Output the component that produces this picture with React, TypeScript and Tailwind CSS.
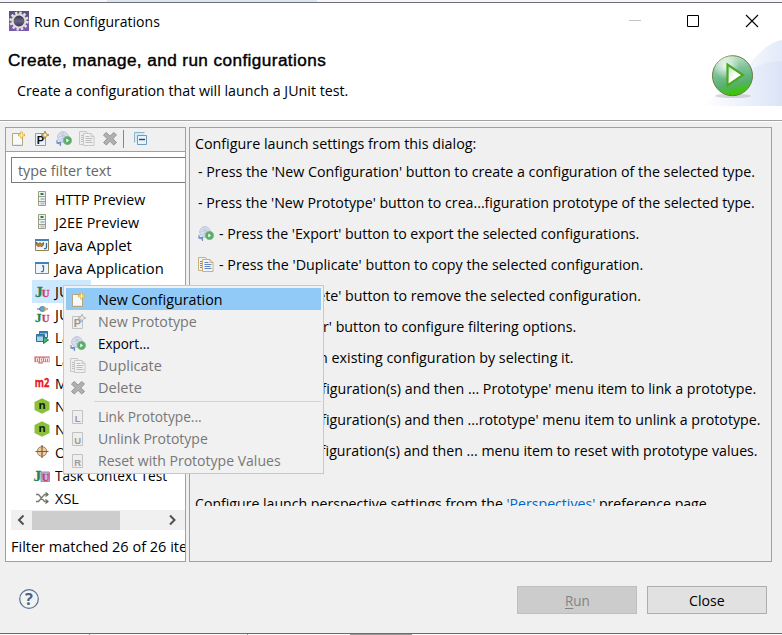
import { useLayoutEffect, useRef, useState, type ReactNode } from 'react';

/* Single line of text squeezed or stretched to a given width. */
function Fit({ w, className = '', children }: { w: number; className?: string; children: ReactNode }) {
  const ref = useRef<HTMLSpanElement>(null);
  const [scale, setScale] = useState(1);
  useLayoutEffect(() => {
    if (ref.current) setScale(w / ref.current.offsetWidth);
  }, [w]);
  return (
    <span className="block shrink-0" style={{ width: w }}>
      <span
        ref={ref}
        className={`inline-block origin-left whitespace-nowrap ${className}`}
        style={{ transform: `scaleX(${scale})` }}
      >
        {children}
      </span>
    </span>
  );
}

function Svg({ children, className = 'size-4' }: { children: ReactNode; className?: string }) {
  return (
    <svg viewBox="0 0 16 16" className={`block shrink-0 ${className}`} fill="none">
      {children}
    </svg>
  );
}

const sans = 'font-["Open_Sans","Liberation_Sans",sans-serif]';

function EclipseIcon() {
  return (
    <svg viewBox="0 0 20 20" className="-mt-0.5 block size-5 shrink-0">
      <defs>
        <linearGradient id="ecl" x1="0" y1="0" x2="0" y2="1">
          <stop offset="0" stopColor="#57507c" />
          <stop offset="1" stopColor="#7a5cb0" />
        </linearGradient>
        <linearGradient id="eclc" x1="0" y1="0" x2="0" y2="1">
          <stop offset="0" stopColor="#282546" />
          <stop offset="0.5" stopColor="#6b6684" />
          <stop offset="1" stopColor="#30275c" />
        </linearGradient>
      </defs>
      <rect width="20" height="20" fill="url(#ecl)" />
      <circle cx="10" cy="10" r="8.3" fill="none" stroke="#e6e2dc" strokeWidth="2.6" strokeDasharray="2.4 1.95" />
      <circle cx="10" cy="10" r="6.5" fill="url(#eclc)" stroke="#dedad4" strokeWidth="2.2" />
    </svg>
  );
}

function NewIcon() {
  return (
    <Svg>
      <path d="M2.5 2.5h8l2 3v9h-10z" fill="#f7fafc" stroke="#b5a67a" />
      <path d="M3.5 13.5h8" stroke="#dfe9f2" />
      <path d="M11.5 .5v7M8 4h7" stroke="#d9b64c" strokeWidth="2.4" />
      <path d="M11.5 1.5v5M9 4h5" stroke="#fff3bd" strokeWidth="1" />
    </Svg>
  );
}

function PrototypeIcon({ gray = false }: { gray?: boolean }) {
  return (
    <Svg>
      <path d="M2.5 2.5h10v12h-10z" fill={gray ? '#eeeeee' : '#eaf3fa'} stroke={gray ? '#c2c2c2' : '#a99a70'} />
      <text x="3.8" y="13" fontFamily="Liberation Sans" fontWeight="bold" fontSize="11" fill={gray ? '#979797' : '#111111'}>
        P
      </text>
      <path d="M12 0l1 2.8L16 4l-3 1.2L12 8l-1-2.8L8 4l3-1.2z" fill={gray ? '#eee' : '#fff0a0'} stroke={gray ? '#aaa' : '#9a7a2c'} strokeWidth=".8" />
    </Svg>
  );
}

function ExportIcon() {
  return (
    <Svg>
      <circle cx="7" cy="6" r="5.3" fill="#dbe2ef" stroke="#b7c2da" />
      <path d="M4 2.5l3 2 3-1M3 6l4-1.5 4 2M7 1v10M4 9l3-2 3 2" stroke="#b9c2d9" strokeWidth=".8" />
      <path d="M1 9v3l3 1M1.5 11.500h3V15" stroke="#6e91be" strokeWidth="1.2" />
      <circle cx="11.5" cy="9.5" r="4.2" fill="#5aae6b" stroke="#7dbb80" strokeWidth=".6" />
      <path d="M10.3 7.6l2.8 1.900-2.800 1.900z" fill="#fff" />
    </Svg>
  );
}

function CopyIcon({ gray = false }: { gray?: boolean }) {
  const edge = gray ? '#c8c8c8' : '#c8b27a';
  const ink = gray ? '#bdbdbd' : '#6484c4';
  return (
    <Svg>
      <path d="M.5 .5h7l1.5 2v11H.5z" fill={gray ? '#eee' : '#eef3fa'} stroke={edge} />
      <path d="M2 4.5h2M2 6.5h2M2 8.5h2M2 10.5h2" stroke={ink} />
      <path d="M4.500 2.500h7.500l3 3v9H4.500z" fill={gray ? '#f1f1f1' : '#f1f6fd'} stroke={edge} />
      <path d="M12 2.500v3h3" stroke={edge} />
      <path d="M6.500 5.500h4M6.500 7.500h7M6.500 9.500h6M6.500 11.500h7" stroke={ink} />
    </Svg>
  );
}

function DeleteIcon() {
  return (
    <Svg>
      <path d="M1.500 4L4.300 1.500 8 5.200l3.700-3.700L14.500 4 10.800 7.700l3.700 3.800-2.800 2.500L8 10.300l-3.700 3.700L1.500 11.500l3.700-3.800z" fill="#b0b0b0" stroke="#949494" strokeWidth="1" strokeLinejoin="round" />
    </Svg>
  );
}

function CollapseIcon() {
  return (
    <Svg>
      <path d="M1.500 11.500v-10h10" stroke="#8fb4cf" />
      <path d="M2 2h9v2H4v7H2z" fill="#d6e8f4" />
      <path d="M4.500 4.500h9v9h-9z" fill="#e6f3fb" stroke="#6f9dbd" />
      <path d="M6 8.500h6" stroke="#174a80" strokeWidth="1.400" />
    </Svg>
  );
}

function ServerIcon() {
  return (
    <Svg>
      <path d="M4.500 .5h7v14h-7z" fill="#eef2ef" stroke="#9a9f80" />
      <path d="M5 5.500h6M5 10.500h6" stroke="#9ba38e" />
      <path d="M6.500 3h3" stroke="#26804b" strokeWidth="2" />
      <path d="M6.500 8h4M6.500 12.500h4" stroke="#b3bfda" strokeWidth="2" />
    </Svg>
  );
}

function AppIcon({ applet = false }: { applet?: boolean }) {
  return (
    <Svg>
      <path d="M1.500 2.500h13v11h-13z" fill="#eef6fb" stroke={applet ? '#9b8050' : '#8d8a68'} />
      <path d="M1 3h14" stroke="#3f83ba" strokeWidth="2" />
      {applet ? (
        <>
          <path d="M2.500 5v3l2 2 1.500-1.500L7.500 10l2-2V5.500L7.500 7 6 5.500 4.500 7z" fill="#b98432" stroke="#6e4a1c" strokeWidth=".7" />
          <path d="M12.500 6v4c0 1.500-1 2-2.500 1.500" stroke="#326c9c" strokeWidth="1.300" />
        </>
      ) : (
        <path d="M9.500 6v4c0 1.500-1 2-2.500 1.500M8 6h2" stroke="#44719b" strokeWidth="1.300" />
      )}
    </Svg>
  );
}

function JUnitIcon({ variant = 'plain' }: { variant?: 'plain' | 'plug' | 'task' }) {
  const y = variant === 'plug' ? 15.5 : 13.500;
  const green = '#26834e';
  const red = '#c9405c';
  return (
    <Svg className="size-4 overflow-visible">
      {variant === 'task' && <path d="M7 5h8.500v9.500H7z" fill="#b9b4e4" stroke="#8f8bc8" />}
      <text x={variant === 'task' ? -0.5 : 1} y={y} fontFamily="Liberation Serif" fontWeight="bold" fontSize={variant === 'plug' ? 13 : 15.5} fill={green} stroke={green} strokeWidth=".3">
        J
      </text>
      <text x="7.800" y={y} fontFamily="Liberation Serif" fontWeight="bold" fontSize="10.800" fill={red} stroke={red} strokeWidth=".3">
        U
      </text>
      {variant === 'plug' && (
        <>
          <path d="M3 3h11" stroke="#8b9fae" strokeWidth="1.500" />
          <ellipse cx="8.500" cy="3" rx="3" ry="2.500" fill="#6ba3cc" stroke="#387099" strokeWidth=".7" />
          <path d="M10.500 .8v4.400l3.500-2.200z" fill="#e5b25b" />
        </>
      )}
    </Svg>
  );
}

function LaunchIcon() {
  return (
    <Svg>
      <path d="M5.500 2.500h8v6h-8z" fill="#cce5f5" stroke="#326c97" />
      <path d="M5.500 3.500h8" stroke="#397fb1" strokeWidth="2" />
      <path d="M2.500 5.500h8v7h-8z" fill="#a9d3ea" stroke="#326c97" />
      <path d="M2.500 6.500h8" stroke="#397fb1" strokeWidth="2" />
      <path d="M9.500 7.500l5 3.500-5 3.500z" fill="#47b879" stroke="#18774a" />
    </Svg>
  );
}

function NpmIcon() {
  return (
    <Svg>
      <path d="M.5 4.500h15v5.500h-7v1.500h-4V10h-4z" fill="#dc7378" stroke="#e0a5a6" strokeWidth=".6" />
      <path d="M2.500 9.500V6.200h2v3.300M6.500 10.500V6.200h2v2.800h-2M10.500 9.500V6.200h4v3.300M12.500 6.200v3.300" stroke="#fff" strokeWidth=".8" />
    </Svg>
  );
}

function M2Icon() {
  return (
    <Svg className="size-4 overflow-visible">
      <text x=".8" y="12" fontFamily="Open Sans" fontWeight="bold" fontSize="12" textLength="14.500" lengthAdjust="spacingAndGlyphs" fill="#e9141c" stroke="#e9141c" strokeWidth=".3">
        m2
      </text>
    </Svg>
  );
}

function NodeIcon() {
  return (
    <Svg className="size-4 overflow-visible">
      <path d="M8 .2l7.500 3.900v7.800L8 15.800.5 11.900V4.100z" fill="#8cc03c" />
      <text x="8" y="11.200" textAnchor="middle" fontFamily="Open Sans" fontWeight="bold" fontSize="11" fill="#151a0b">
        n
      </text>
    </Svg>
  );
}

function OsgiIcon() {
  return (
    <Svg>
      <circle cx="8" cy="7.500" r="4.800" fill="#e8cf9f" stroke="#a77f5c" />
      <path d="M8 1v13M1.500 7.500h13" stroke="#85583f" strokeWidth="1.200" />
    </Svg>
  );
}

function XslIcon() {
  return (
    <Svg>
      <path d="M2 4.500h2.500l6 7H14M2 11.500h2.500l6-7H14" stroke="#7b7a6c" strokeWidth="1.300" />
      <path d="M11.500 2.500L14 4.500l-2.500 2M11.500 9.500l2.500 2-2.500 2" stroke="#6b6a5e" strokeWidth="1.200" />
    </Svg>
  );
}

function LetterIcon({ letter }: { letter: string }) {
  return (
    <Svg>
      <path d="M2.500 1.500h10v13h-10z" fill="#eee" stroke="#c2c2c2" />
      <text x="7.600" y="13" textAnchor="middle" fontFamily="Liberation Sans" fontWeight="bold" fontSize="9.500" fill="#9b9b9b">
        {letter}
      </text>
    </Svg>
  );
}

function Banner() {
  return (
    <svg viewBox="0 0 80 66" className="block h-[66px] w-20">
      <defs>
        <linearGradient id="sky" x1="0" y1="0" x2="1" y2="0">
          <stop offset="0" stopColor="#ffffff" />
          <stop offset=".55" stopColor="#f3f6fd" />
          <stop offset="1" stopColor="#e3eaf9" />
        </linearGradient>
        <linearGradient id="sky2" x1="0" y1="0" x2="1" y2="0">
          <stop offset="0" stopColor="#ffffff" />
          <stop offset="1" stopColor="#dbe4f7" />
        </linearGradient>
        <linearGradient id="ball" x1="0" y1="0" x2=".25" y2="1">
          <stop offset="0" stopColor="#e2f3df" />
          <stop offset=".45" stopColor="#7fc29a" />
          <stop offset=".8" stopColor="#55b06c" />
          <stop offset="1" stopColor="#3fc30c" />
        </linearGradient>
        <linearGradient id="tri" x1="0" y1="0" x2="1" y2="1">
          <stop offset="0" stopColor="#b5dfae" />
          <stop offset=".5" stopColor="#ffffff" />
        </linearGradient>
        <radialGradient id="shine">
          <stop offset="0" stopColor="#ffffff" stopOpacity=".85" />
          <stop offset="1" stopColor="#ffffff" stopOpacity="0" />
        </radialGradient>
      </defs>
      <path d="M8 66C35 47 55 3 80 0v66z" fill="url(#sky)" />
      <path d="M0 66C26 47 48 21 80 21v45z" fill="url(#sky2)" />
      <ellipse cx="31" cy="56" rx="18" ry="2" fill="#aaa8b2" opacity=".45" />
      <circle cx="30.500" cy="35.700" r="20" fill="url(#ball)" stroke="#667b40" strokeWidth="1" />
      <circle cx="24" cy="26" r="13" fill="url(#shine)" />
      <path d="M25.500 24.500v21L41 35z" fill="url(#tri)" stroke="#4ca822" strokeWidth="2.200" />
    </svg>
  );
}

const tree: { icon: ReactNode; label: string; w: number }[] = [
  { icon: <ServerIcon />, label: 'HTTP Preview', w: 90 },
  { icon: <ServerIcon />, label: 'J2EE Preview', w: 84 },
  { icon: <AppIcon applet />, label: 'Java Applet', w: 77 },
  { icon: <AppIcon />, label: 'Java Application', w: 109 },
  { icon: <JUnitIcon />, label: 'JUnit', w: 32 },
  { icon: <JUnitIcon variant="plug" />, label: 'JUnit Plug-in Test', w: 115 },
  { icon: <LaunchIcon />, label: 'Launch Group', w: 90 },
  { icon: <NpmIcon />, label: 'Launch npm', w: 78 },
  { icon: <M2Icon />, label: 'Maven Build', w: 80 },
  { icon: <NodeIcon />, label: 'Node.js application', w: 128 },
  { icon: <NodeIcon />, label: 'Node.js test', w: 80 },
  { icon: <OsgiIcon />, label: 'OSGi Framework', w: 110 },
  { icon: <JUnitIcon variant="task" />, label: 'Task Context Test', w: 112 },
  { icon: <XslIcon />, label: 'XSL', w: 24 },
];

const hints: { icon?: ReactNode; text: string; w: number; indent?: boolean }[] = [
  { text: "- Press the 'New Configuration' button to create a configuration of the selected type.", w: 557 },
  { text: "- Press the 'New Prototype' button to crea...figuration prototype of the selected type.", w: 557 },
  { icon: <ExportIcon />, text: "- Press the 'Export' button to export the selected configurations.", w: 420 },
  { icon: <CopyIcon />, text: "- Press the 'Duplicate' button to copy the selected configuration.", w: 424 },
  { icon: <DeleteIcon />, text: "- Press the 'Delete' button to remove the selected configuration.", w: 422 },
  { icon: <CollapseIcon />, text: "- Press the 'Filter' button to configure filtering options.", w: 357 },
  { text: '- Edit or view an existing configuration by selecting it.', w: 352, indent: true },
  { text: "- Select launch configuration(s) and then ... Prototype' menu item to link a prototype.", w: 558 },
  { text: "- Select launch configuration(s) and then ...rototype' menu item to unlink a prototype.", w: 562 },
  { text: '- Select launch configuration(s) and then ... menu item to reset with prototype values.', w: 560 },
];

type Item = { icon: ReactNode; label: string; w: number; on?: boolean; hot?: boolean };
const menuTop: Item[] = [
  { icon: <NewIcon />, label: 'New Configuration', w: 125, on: true, hot: true },
  { icon: <PrototypeIcon gray />, label: 'New Prototype', w: 99 },
  { icon: <ExportIcon />, label: 'Export...', w: 52, on: true },
  { icon: <CopyIcon gray />, label: 'Duplicate', w: 64 },
  { icon: <DeleteIcon />, label: 'Delete', w: 44 },
];
const menuBottom: Item[] = [
  { icon: <LetterIcon letter="L" />, label: 'Link Prototype...', w: 104 },
  { icon: <LetterIcon letter="U" />, label: 'Unlink Prototype', w: 110 },
  { icon: <LetterIcon letter="R" />, label: 'Reset with Prototype Values', w: 183 },
];

function MenuRow({ item, className = '' }: { item: Item; className?: string }) {
  return (
    <div className={`flex h-[22px] items-center pl-1 ${className} ${item.hot ? 'bg-[#91c9f7]' : ''} ${item.on ? 'text-black' : 'text-[#777]'}`}>
      {item.icon}
      <div className="ml-3">
        <Fit w={item.w}>{item.label}</Fit>
      </div>
    </div>
  );
}

function ContextMenu() {
  return (
    <div className="absolute left-[63px] top-[285px] h-[189px] w-[261px] border border-[#c8c8c8] bg-[#f1f1f1] p-0.5">
      {menuTop.map((i) => (
        <MenuRow key={i.label} item={i} className="pt-0.5" />
      ))}
      <div className="h-2 pl-7 pt-[3px]">
        <div className="h-px bg-[#d2d2d2]" />
      </div>
      {menuBottom.map((i) => (
        <MenuRow key={i.label} item={i} />
      ))}
    </div>
  );
}

function LeftPanel() {
  return (
    <div className="flex h-[435px] w-[181px] flex-col overflow-hidden border border-[#a0a0a0] bg-white">
      <div className="flex h-6 shrink-0 items-start gap-[7px] border-b border-[#a0a0a0] bg-[#f0f0f0] pl-1 pt-[3px]">
        <NewIcon />
        <PrototypeIcon />
        <ExportIcon />
        <CopyIcon gray />
        <DeleteIcon />
        <div className="-ml-0.5 -mr-px -mt-px h-[18px] w-px bg-[#868686]" />
        <div className="ml-[3px]">
          <CollapseIcon />
        </div>
      </div>
      <div className="ml-[5px] mt-[5px] flex h-[26px] w-[190px] shrink-0 items-center border border-[#7a7a7a] pl-1.5 pt-0.5 text-[#666]">
        <Fit w={93}>type filter text</Fit>
      </div>
      <div className="mt-[5px] shrink-0">
        {tree.map((row, i) => (
          <div key={i} className="flex h-[23px] items-center pl-[26px]">
            <div className={`flex h-full items-center gap-[5px] pl-0.5 ${i === 4 ? 'w-[59px] bg-[#cce8ff]' : ''}`}>
              <div className="pb-px">{row.icon}</div>
              <Fit w={row.w}>{row.label}</Fit>
            </div>
          </div>
        ))}
      </div>
      <div className="ml-[5px] flex h-5 shrink-0 items-center bg-[#f0f0f0]">
        <svg viewBox="0 0 21 20" className="h-5 w-[21px]" fill="none">
          <path d="M12.500 5.500L8 10l4.500 4.500" stroke="#505050" strokeWidth="2" />
        </svg>
        <div className="h-[19px] w-[88px] bg-[#cdcdcd]" />
        <svg viewBox="0 0 21 20" className="ml-[42px] h-5 w-[21px]" fill="none">
          <path d="M8 5.500l4.500 4.500L8 14.500" stroke="#505050" strokeWidth="2" />
        </svg>
      </div>
      <div className="ml-[5px] mt-0.5 flex h-[30px] shrink-0 items-center">
        <Fit w={196}>Filter matched 26 of 26 items</Fit>
      </div>
    </div>
  );
}

function RightPanel() {
  return (
    <div className="h-[435px] w-[583px] overflow-hidden border border-[#a0a0a0]">
      <div className="flex h-8 items-center pl-[5px]">
        <Fit w={281}>Configure launch settings from this dialog:</Fit>
      </div>
      <div className="-mt-1 pl-2">
        {hints.map((h) => (
          <div key={h.text} className={`flex h-[31px] items-center gap-[5px] ${h.indent ? 'pl-6' : ''}`}>
            {h.icon && <div className="pt-px">{h.icon}</div>}
            <Fit w={h.w}>{h.text}</Fit>
          </div>
        ))}
      </div>
      <div className="mt-[26px] flex h-[14px] items-start overflow-hidden pl-[5px] pt-px">
        <Fit w={515}>
          Configure launch perspective settings from the <span className="text-[#0066cc]">'Perspectives'</span> preference page.
        </Fit>
      </div>
    </div>
  );
}

export default function App() {
  return (
    <div className={`relative flex h-[635px] w-[782px] flex-col overflow-hidden bg-[#f0f0f0] text-[14.5px] leading-[22px] text-black ${sans}`}>
      <div className="flex h-0.5 shrink-0 bg-[#f5f6f9]">
        <div className="ml-[107px] w-[210px] bg-[#dce6f2]" />
      </div>
      <div className="flex h-[119px] shrink-0 border-b border-t border-b-[#a0a0a0] border-t-[#6d6d75] bg-white">
        <div className="flex-1">
          <div className="flex h-9 items-center gap-[5px] pl-[9px] pt-0.5">
            <EclipseIcon />
            <Fit w={126}>Run Configurations</Fit>
          </div>
          <div className="flex h-[42px] items-center pl-2 pt-0.5">
            <Fit w={318} className='font-["Liberation_Sans",sans-serif] text-[16px] tracking-[0.4px] [-webkit-text-stroke:0.4px_black]'>
              Create, manage, and run configurations
            </Fit>
          </div>
          <div className="flex h-5 items-center pl-[17px]">
            <Fit w={331}>Create a configuration that will launch a JUnit test.</Fit>
          </div>
        </div>
        <div className="w-[160px]">
          <svg viewBox="0 0 160 36" className="block h-9 w-[160px]" fill="none">
            <path d="M7 17.500h12" stroke="#c4c4c4" />
            <path d="M65.500 12.500h11v11h-11z" stroke="#000" />
            <path d="M124 12l12 12M136 12l-12 12" stroke="#000" strokeWidth="1.100" />
          </svg>
          <div className="ml-20 mt-px">
            <Banner />
          </div>
        </div>
      </div>
      <div className="h-px shrink-0 bg-white" />
      <div className="mt-[5px] flex shrink-0 gap-[3px] pl-[5px]">
        <LeftPanel />
        <RightPanel />
      </div>
      <div className="flex h-[71px] shrink-0 items-start pl-[19px] pr-[15px] pt-6">
        <svg viewBox="0 0 20 20" className="mt-[3px] size-5">
          <circle cx="10" cy="10" r="9.300" fill="#f1f3f5" stroke="#5d7290" strokeWidth="1.200" />
          <text x="10" y="15.800" textAnchor="middle" fontFamily="Open Sans" fontWeight="bold" fontSize="16.500" fill="#4b6284">
            ?
          </text>
        </svg>
        <button className="ml-auto flex h-7 w-[120px] items-center justify-center border border-[#bfbfbf] bg-[#cccccc] pt-0.5 text-[#838383]">
          <Fit w={25}>
            <span className="underline underline-offset-2">R</span>un
          </Fit>
        </button>
        <button className="ml-2.5 flex h-7 w-[120px] items-center justify-center border border-[#adadad] bg-[#e1e1e1] pt-0.5">
          <Fit w={36}>Close</Fit>
        </button>
      </div>
      <div className="h-px shrink-0 bg-[#6b6b73]" />
      <div className="flex h-px shrink-0 bg-[#f8f8fa]">
        <div className="ml-[89px] w-px bg-[#999]" />
        <div className="ml-[157px] w-px bg-[#999]" />
        <div className="ml-[102px] w-[62px] bg-[#999]" />
      </div>
      <ContextMenu />
    </div>
  );
}
